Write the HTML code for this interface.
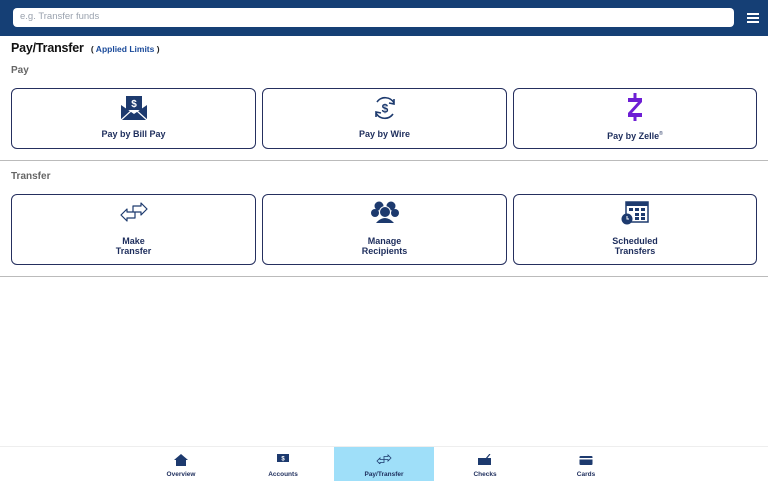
<!DOCTYPE html>
<html><head><style>
*{margin:0;padding:0;box-sizing:border-box}
body{width:768px;height:480px;position:relative;background:#fff;font-family:"Liberation Sans",sans-serif;overflow:hidden}
.hdr{position:absolute;left:0;top:0;width:768px;height:36px;background:#153f75}
.search{position:absolute;left:13px;top:8px;width:721px;height:19px;background:#fff;border-radius:4px;font-size:9.5px;color:#9aa2ae;padding:3px 0 0 7px}
.hb{position:absolute;left:747px;width:12px;height:2px;background:#fff}
.title{position:absolute;left:11px;top:41px;font-size:12.5px;color:#111;font-weight:bold;letter-spacing:-0.2px}
.lim{font-size:8.5px;font-weight:bold;color:#1a4a9a;margin-left:4px;letter-spacing:0}
.lim span{color:#222}
.sec{position:absolute;left:11px;font-size:10px;font-weight:bold;color:#666}
.card{position:absolute;border:1.5px solid #252f5e;border-radius:6px;text-align:center;color:#1d2d5c;font-weight:bold;font-size:9px;line-height:10px}
.card svg{position:absolute;left:50%;transform:translateX(-50%)}
.line{position:absolute;left:0;width:768px;height:1px;background:#bbb}
.nav{position:absolute;left:0;top:446px;width:768px;height:34px;border-top:1px solid #eee}
.ni{position:absolute;top:0;width:100px;height:34px;text-align:center;font-size:6.5px;font-weight:bold;color:#1d2d5c;padding-top:24px}
.ni svg{position:absolute;left:50%;top:7px;transform:translateX(-50%)}
</style></head><body>
<div class="hdr"><div class="search">e.g. Transfer funds</div>
<div class="hb" style="top:13px"></div><div class="hb" style="top:17px"></div><div class="hb" style="top:21px"></div></div>
<div class="title">Pay/Transfer <span class="lim"><span>(</span> Applied Limits <span>)</span></span></div>
<div class="sec" style="top:65px">Pay</div>
<div class="card" style="left:11px;top:88px;width:245px;height:61px"><svg style="top:6px" width="28" height="26" viewBox="0 0 28 26"><rect x="6" y="1" width="16" height="14" fill="#1d3a6e"/><text x="14" y="12" font-size="10" font-weight="bold" fill="#fff" text-anchor="middle" font-family="Liberation Sans">$</text><path d="M1 10 L1 25 L27 25 L27 10 L14 19 Z" fill="#1d3a6e"/><path d="M1 25 L11 16 M27 25 L17 16" stroke="#fff" stroke-width="1.2"/></svg><div style="padding-top:40px">Pay by Bill Pay</div></div>
<div class="card" style="left:262px;top:88px;width:245px;height:61px"><svg style="top:5px" width="28" height="28" viewBox="0 0 28 28"><path d="M6 8 A10 10 0 0 1 23 9 M22 20 A10 10 0 0 1 5 19" fill="none" stroke="#1d3a6e" stroke-width="1.6"/><path d="M23 5 L23 10 L18 9 M5 23 L5 18 L10 19" fill="none" stroke="#1d3a6e" stroke-width="1.6"/><text x="14" y="18.5" font-size="12" font-weight="bold" fill="#1d3a6e" text-anchor="middle" font-family="Liberation Sans">$</text></svg><div style="padding-top:40px">Pay by Wire</div></div>
<div class="card" style="left:513px;top:88px;width:244px;height:61px"><svg style="top:3px" width="20" height="30" viewBox="0 0 20 30"><path d="M3 6 H17 V10 L7 21 H17 V25 H3 V21 L13 10 H3 Z" fill="#6d1ed4"/><rect x="8.5" y="1" width="3" height="6" fill="#6d1ed4"/><rect x="8.5" y="24" width="3" height="5" fill="#6d1ed4"/></svg><div style="padding-top:40px">Pay by Zelle<sup style="font-size:5px;font-weight:normal">®</sup></div></div>
<div class="line" style="top:160px"></div>
<div class="sec" style="top:171px">Transfer</div>
<div class="card" style="left:11px;top:194px;width:245px;height:71px"><svg style="top:6px" width="30" height="22" viewBox="0 0 30 22"><path d="M2 14 L8 8 V11 H16 V17 H8 V20 Z M28 8 L22 2 V5 H14 V11 H22 V14 Z" fill="none" stroke="#1d3a6e" stroke-width="1.2" stroke-linejoin="round"/></svg><div style="padding-top:41px">Make<br>Transfer</div></div>
<div class="card" style="left:262px;top:194px;width:245px;height:71px"><svg style="top:6px" width="30" height="22" viewBox="0 0 30 22"><circle cx="9" cy="5" r="4.5" fill="#1d3a6e"/><circle cx="21" cy="5" r="4.5" fill="#1d3a6e"/><circle cx="5" cy="12" r="4" fill="#1d3a6e"/><circle cx="25" cy="12" r="4" fill="#1d3a6e"/><circle cx="15" cy="11" r="5.5" fill="#1d3a6e" stroke="#fff" stroke-width="1"/><path d="M6 22 Q15 12 24 22 Z" fill="#1d3a6e"/></svg><div style="padding-top:41px">Manage<br>Recipients</div></div>
<div class="card" style="left:513px;top:194px;width:244px;height:71px"><svg style="top:6px" width="28" height="24" viewBox="0 0 28 24"><rect x="5" y="1" width="22" height="20" fill="#fff" stroke="#1d3a6e" stroke-width="1.5"/><rect x="5" y="1" width="22" height="4" fill="#1d3a6e"/><g fill="#1d3a6e"><rect x="8" y="7" width="4" height="3"/><rect x="14" y="7" width="4" height="3"/><rect x="20" y="7" width="4" height="3"/><rect x="14" y="12" width="4" height="3"/><rect x="20" y="12" width="4" height="3"/><rect x="14" y="16" width="4" height="3"/><rect x="20" y="16" width="4" height="3"/></g><circle cx="6" cy="18" r="5.5" fill="#1d3a6e"/><path d="M6 15 V18 H8" stroke="#fff" stroke-width="1" fill="none"/></svg><div style="padding-top:41px">Scheduled<br>Transfers</div></div>
<div class="line" style="top:276px"></div>
<div class="nav">
<div class="ni" style="left:131px"><svg width="14" height="12" viewBox="0 0 14 12"><path d="M7 0 L14 6 H12 V12 H2 V6 H0 Z" fill="#1d3a6e"/></svg>Overview</div>
<div class="ni" style="left:233px"><svg width="12" height="9" viewBox="0 0 12 9"><rect width="12" height="8" fill="#1d3a6e"/><text x="6" y="6.5" font-size="6" fill="#fff" text-anchor="middle">$</text></svg>Accounts</div>
<div class="ni" style="left:334px;background:#9fdff9"><svg width="16" height="10" viewBox="0 0 16 10"><path d="M1 7 L4 4 V5.5 H8 V8.5 H4 V10 Z M15 4 L12 1 V2.5 H8 V5.5 H12 V7 Z" fill="none" stroke="#1d3a6e" stroke-width=".8"/></svg>Pay/Transfer</div>
<div class="ni" style="left:435px"><svg width="14" height="11" viewBox="0 0 14 11"><rect x="0" y="4" width="13" height="7" fill="#1d3a6e"/><path d="M7 6 L12 0" stroke="#1d3a6e" stroke-width="1.2"/></svg>Checks</div>
<div class="ni" style="left:536px"><svg width="13" height="11" viewBox="0 0 13 11"><rect x="0" y="2" width="13" height="9" rx="1" fill="#1d3a6e"/><rect x="0" y="4" width="13" height="1.5" fill="#fff"/></svg>Cards</div>
</div>
</body></html>
